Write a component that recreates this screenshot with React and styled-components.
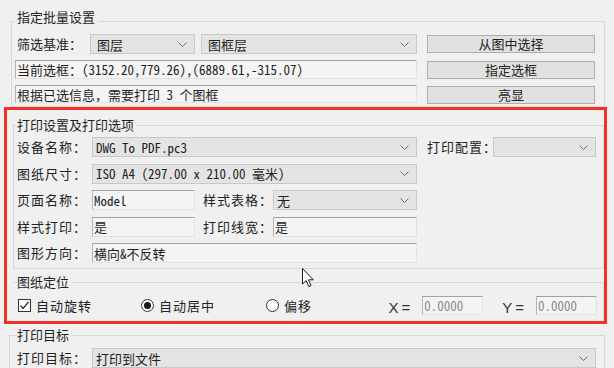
import React from "react";
import styled, { createGlobalStyle } from "styled-components";

const mono = `"Noto Sans Mono CJK SC", "Liberation Mono", "Noto Sans CJK SC", monospace`;

const GlobalStyle = createGlobalStyle`
  html, body {
    margin: 0;
    padding: 0;
    background: #f0f0f0;
    overflow: hidden;
  }
  body {
    font-family: "Noto Sans CJK SC", "Noto Sans", sans-serif;
    font-size: 13px;
    color: #1f1f1f;
  }
`;

function Chevron() {
  return (
    <svg width="9" height="5" viewBox="0 0 9 5">
      <polyline points="0.5,0.5 4.5,4.5 8.5,0.5" fill="none" stroke="#6e6e6e" strokeWidth="1" />
    </svg>
  );
}

function Combo({ children, pad, span, width }) {
  return (
    <ComboBox $pad={pad} $span={span} $w={width}>
      <span>{children}</span>
      <Chevron />
    </ComboBox>
  );
}

function App() {
  return (
    <Page>
      <GlobalStyle />

      <Group $margin="0 9px 0 11px" $padding="1px 9px 2px 3px">
        <Legend $lift $pl={2}>指定批量设置</Legend>
        <BatchGrid>
          <Column $gap={6}>
            <Line>
              <Label $w={75} $pl={2}>筛选基准：</Label>
              <Combo pad={6} width={105}>图层</Combo>
              <Combo pad={6}>图框层</Combo>
            </Line>
            <Field>当前选框：(3152.20,779.26),(6889.61,-315.07)</Field>
            <Field $h={18}>根据已选信息，需要打印 3 个图框</Field>
          </Column>
          <Column $gap={7.5} $top={1}>
            <Button>从图中选择</Button>
            <Button>指定选框</Button>
            <Button>亮显</Button>
          </Column>
        </BatchGrid>
      </Group>

      <Highlight>
        <Group $margin="7px 0 0 6px" $padding="4px 6px 5px 3px">
          <Legend>打印设置及打印选项</Legend>
          <OptionsGrid>
            <Label $spaced>设备名称：</Label>
            <Combo span={3}>DWG To PDF.pc3</Combo>
            <Label $spaced $pl={10}>打印配置：</Label>
            <Combo />

            <Label $spaced>图纸尺寸：</Label>
            <Combo span={3}>ISO A4 (297.00 x 210.00 毫米)</Combo>
            <Spacer $span={2} />

            <Label $spaced>页面名称：</Label>
            <Field $h={20}>Model</Field>
            <Label $spaced $pl={8}>样式表格：</Label>
            <Combo>无</Combo>
            <Spacer $span={2} />

            <Label $spaced>样式打印：</Label>
            <Field $h={20}>是</Field>
            <Label $spaced $pl={8}>打印线宽：</Label>
            <Field $h={20}>是</Field>
            <Spacer $span={2} />

            <Label $spaced>图形方向：</Label>
            <Field $h={20} $span={3}>横向&amp;不反转</Field>
          </OptionsGrid>
        </Group>

        <Group $open $margin="5px 0 0 6px" $padding="6px 6px 5px 3px">
          <Legend>图纸定位</Legend>
          <PlacementRow>
            <Option $w={123}>
              <CheckBox>
                <svg width="11" height="11" viewBox="0 0 11 11">
                  <polyline points="1.5,5.5 4,8.5 9.5,2" fill="none" stroke="#2b2b2b" strokeWidth="1.2" />
                </svg>
              </CheckBox>
              自动旋转
            </Option>
            <Option $w={125}>
              <Radio $checked />
              自动居中
            </Option>
            <Option $grow>
              <Radio />
              偏移
            </Option>
            <Coord>X=</Coord>
            <Field $h={19} $w={61} $muted>0.0000</Field>
            <Coord $ml={19}>Y=</Coord>
            <Field $h={19} $w={61} $muted>0.0000</Field>
          </PlacementRow>
        </Group>
      </Highlight>

      <Group $margin="3px 9px 0 9px" $padding="5px 8px 4px 7px">
        <Legend>打印目标</Legend>
        <Line>
          <Label $w={75} $spaced>打印目标：</Label>
          <Combo>打印到文件</Combo>
        </Line>
      </Group>

      <Cursor width="13" height="20" viewBox="0 0 13 20">
        <path
          d="M0.5,0.5 L0.5,16 L4.2,12.6 L6.8,18.6 L9,17.6 L6.5,11.8 L11.3,11.8 Z"
          fill="#ffffff"
          stroke="#1a1a1a"
          strokeWidth="1"
          strokeLinejoin="round"
        />
      </Cursor>
    </Page>
  );
}

const Page = styled.div`
  position: relative;
  width: 614px;
  height: 368px;
  padding-top: 9px;
  box-sizing: border-box;
  overflow: hidden;
`;

const Group = styled.fieldset`
  margin: ${(p) => p.$margin || "0"};
  padding: ${(p) => p.$padding || "0"};
  border: 1px solid #d7d7d7;
  min-width: 0;
  ${(p) =>
    p.$open &&
    `
    border-left-color: transparent;
    border-bottom-color: transparent;
  `}
`;

const Legend = styled.legend`
  padding: 0 3px ${(p) => (p.$lift ? "8px" : "0")} ${(p) => p.$pl || 0}px;
  line-height: 16px;
  color: #1f1f1f;
`;

const BatchGrid = styled.div`
  display: grid;
  grid-template-columns: 402px 168px;
  column-gap: 10px;
`;

const Column = styled.div`
  display: flex;
  flex-direction: column;
  gap: ${(p) => p.$gap}px;
  padding-top: ${(p) => p.$top || 0}px;
`;

const Line = styled.div`
  display: flex;
  align-items: center;
  height: 20px;
  gap: 6px;

  & > *:first-child {
    margin-right: -6px;
  }
`;

const Label = styled.div`
  flex: none;
  width: ${(p) => (p.$w ? `${p.$w}px` : "auto")};
  padding-left: ${(p) => p.$pl || 0}px;
  box-sizing: border-box;
  letter-spacing: ${(p) => (p.$spaced ? "1px" : "0")};
  line-height: 20px;
  white-space: nowrap;
  color: #222;
`;

const ComboBox = styled.div`
  flex: ${(p) => (p.$w ? "none" : 1)};
  width: ${(p) => (p.$w ? `${p.$w}px` : "auto")};
  display: flex;
  align-items: center;
  justify-content: space-between;
  height: 20px;
  box-sizing: border-box;
  padding: 0 7px 0 ${(p) => p.$pad ?? 3}px;
  background: #e4e4e4;
  border: 1px solid #c8c8c8;
  font-family: ${mono};
  white-space: nowrap;
  color: #1f1f1f;
  grid-column: ${(p) => (p.$span ? `span ${p.$span}` : "auto")};
`;

const Field = styled.div`
  display: flex;
  align-items: center;
  height: ${(p) => p.$h || 19}px;
  width: ${(p) => (p.$w ? `${p.$w}px` : "auto")};
  flex: none;
  box-sizing: border-box;
  padding-left: 1px;
  background: #f4f4f4;
  border: 1px solid #e2e2e2;
  border-top-color: #a3a3a3;
  border-left-color: #b5b5b5;
  font-family: ${mono};
  white-space: nowrap;
  overflow: hidden;
  color: ${(p) => (p.$muted ? "#8a8a8a" : "#1f1f1f")};
  grid-column: ${(p) => (p.$span ? `span ${p.$span}` : "auto")};
`;

const Button = styled.button`
  height: 18px;
  padding: 0;
  background: #e1e1e1;
  border: 1px solid #adadad;
  font-family: "Noto Sans CJK SC", sans-serif;
  font-size: 13px;
  line-height: 16px;
  color: #222;
`;

const Highlight = styled.div`
  margin: 0 7px 0 4px;
  border: 3px solid #f2302a;
`;

const OptionsGrid = styled.div`
  display: grid;
  grid-template-columns: 75px 103px 78px 144px 76px 103px;
  grid-auto-rows: 20px;
  row-gap: 6.5px;
  align-items: center;
`;

const Spacer = styled.div`
  grid-column: span ${(p) => p.$span};
`;

const PlacementRow = styled.div`
  display: flex;
  align-items: center;
  height: 19px;
  padding-left: 1px;
`;

const Option = styled.div`
  display: flex;
  align-items: center;
  gap: 5px;
  flex: ${(p) => (p.$grow ? 1 : "none")};
  width: ${(p) => (p.$w ? `${p.$w}px` : "auto")};
  color: #222;
  letter-spacing: 1px;
`;

const CheckBox = styled.span`
  display: flex;
  align-items: center;
  justify-content: center;
  width: 13px;
  height: 13px;
  box-sizing: border-box;
  border: 1px solid #333;
  background: #fff;
`;

const Radio = styled.span`
  position: relative;
  width: 13px;
  height: 13px;
  box-sizing: border-box;
  border: 1px solid #333;
  border-radius: 50%;
  background: #fff;

  &::after {
    content: "";
    display: ${(p) => (p.$checked ? "block" : "none")};
    position: absolute;
    left: 2px;
    top: 2px;
    width: 7px;
    height: 7px;
    border-radius: 50%;
    background: #1a1a1a;
  }
`;

const Coord = styled.span`
  margin-left: ${(p) => p.$ml || 0}px;
  margin-right: 9px;
  font-family: "Liberation Sans", sans-serif;
  font-size: 15px;
  letter-spacing: 3px;
  color: #333;
  padding-top: 3px;
`;

const Cursor = styled.svg`
  position: absolute;
  left: 302px;
  top: 268px;
`;

export default App;
